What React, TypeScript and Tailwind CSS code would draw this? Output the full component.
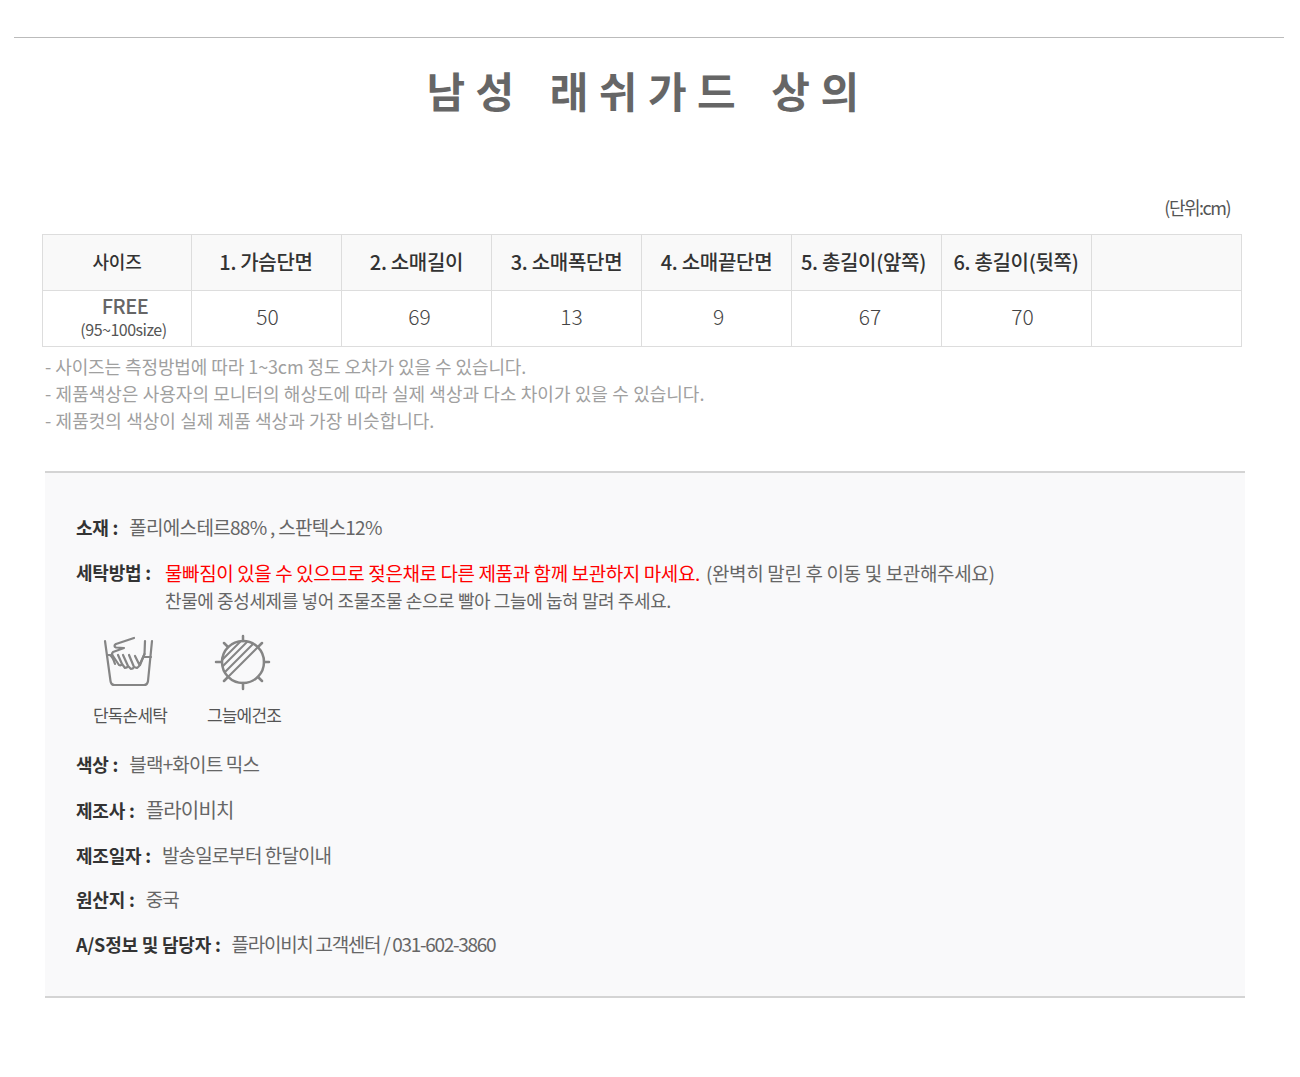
import React from 'react';

const font = { fontFamily: '"Noto Sans CJK KR", "Noto Sans", sans-serif' };

const headers = ['사이즈', '1. 가슴단면', '2. 소매길이', '3. 소매폭단면', '4. 소매끝단면', '5. 총길이(앞쪽)', '6. 총길이(뒷쪽)', ''];
const headerPad = ['w-[149px] text-[18px]', 'text-[20px] pr-[1px]', 'text-[20px]', 'text-[20px]', 'text-[20px]', 'text-[20px] pr-[6px]', 'text-[20px] pr-[1px]', ''];
const values = ['50', '69', '13', '9', '67', '70', ''];
const valuePad = ['pl-[2px]', 'pl-[6px]', 'pl-[10px]', 'pl-[4px]', 'pl-[7px]', 'pl-[12px]', ''];

const HandWashIcon = () => (
  <svg width="60" height="60" viewBox="0 0 60 60" fill="none" stroke="#858585" strokeWidth="2.200" strokeLinecap="round" strokeLinejoin="round">
    <path d="M5 9 L10.500 49 Q11 53 14.500 53 L44 53 Q47.500 53 48 49 L52 9" />
    <path d="M7 23 L10 23 Q13 25 15 32 M45 9 L44.500 22 L40 33 M44.500 25 L51 25" />
    <path d="M34 6 L16 12 Q13 14 16 15.500 L24 16 L13 20 Q11 22 13 24 L19 33 Q21 34 22 32 L18 23 M22 32 L25 36 Q27 36 28 34 L23 23 M28 34 L31 37 Q33 37 34 35 L29 23 M34 35 L37 36 Q39 35 39.500 33 L35 24 M39.500 33 L44.500 22" />
  </svg>
);

const ShadeDryIcon = () => (
  <svg width="62" height="60" viewBox="0 0 62 60" fill="none" stroke="#858585" strokeWidth="2.500" strokeLinecap="round">
    <defs>
      <clipPath id="dial">
        <circle cx="30" cy="30" r="21" />
      </clipPath>
    </defs>
    <circle cx="30" cy="30" r="21" />
    <path d="M30 4 V9 M30 51 V57 M3 30 H8 M51 30 H56 M11 11 L15 15 M45 45 L49 49 M49 11 L45 15 M15 45 L11 49" />
    <g clipPath="url(#dial)" strokeWidth="2">
      <path d="M14 46 L46 14 M4 48 L42 10 M0 44 L36 8 M0 37 L30 7" />
    </g>
  </svg>
);

const InfoRow = ({ label, value, className }: { label: string; value: string; className: string }) => (
  <p className={`flex items-center text-[#666] ${className}`}>
    <b className="font-bold text-[#333] text-[18px] tracking-[-0.200px] mr-[11px]">{label}</b>
    {value}
  </p>
);

export default function App() {
  return (
    <div className="w-[1300px] h-[1077px] bg-white overflow-hidden pt-[37px]" style={font}>
      <div className="ml-[14px] mr-[16px] h-px bg-[#bbb]" />

      <h1 className="mt-[22px] text-center text-[42px] leading-[60px] font-bold text-[#666] tracking-[10.500px] [word-spacing:5px] pr-[4px]">
        남성 래쉬가드 상의
      </h1>

      <p className="mt-[74px] pr-[70px] text-right text-[18px] leading-[26px] text-[#555] tracking-[-1.500px]">(단위:cm)</p>

      <table className="mt-[14px] ml-[42px] w-[1200px] table-fixed border-collapse border border-[#ddd]">
        <tbody>
          <tr className="h-[56px] bg-[#f9f9f9]">
            {headers.map((h, i) => (
              <td
                key={i}
                className={`border border-[#ddd] text-center text-[#333] font-medium tracking-[-0.300px] pb-[2px] ${headerPad[i]}`}
              >
                {h}
              </td>
            ))}
          </tr>
          <tr className="h-[56px]">
            <td className="border border-[#ddd] text-center text-[#555] pb-[1px]">
              <div className="text-[20px] leading-[23px] font-medium tracking-[-0.500px] text-[#666] pl-[16px]">FREE</div>
              <div className="text-[16px] leading-[25px] tracking-[-0.500px] pl-[13px]">(95~100size)</div>
            </td>
            {values.map((v, i) => (
              <td key={i} className={`border border-[#ddd] text-center text-[21px] font-light text-[#444] pb-[4px] ${valuePad[i]}`}>
                {v}
              </td>
            ))}
          </tr>
        </tbody>
      </table>

      <div className="mt-[6px] ml-[45px] text-[18px] leading-[27px] text-[#a0a0a0] [word-spacing:0.300px]">
        <p className="tracking-[-0.150px]">- 사이즈는 측정방법에 따라 1~3cm 정도 오차가 있을 수 있습니다.</p>
        <p>- 제품색상은 사용자의 모니터의 해상도에 따라 실제 색상과 다소 차이가 있을 수 있습니다.</p>
        <p>- 제품컷의 색상이 실제 제품 색상과 가장 비슷합니다.</p>
      </div>

      <section className="mt-[37px] ml-[45px] w-[1200px] h-[527px] bg-[#f9f9fa] border-y-2 border-[#d4d4d4] pt-[40px] pl-[31px]">
        <InfoRow label="소재 :" value="폴리에스테르88% , 스판텍스12%" className="text-[19px] leading-[28px] tracking-[-0.700px]" />

        <div className="mt-[18px] flex text-[19px] leading-[27px] text-[#666]">
          <b className="w-[89px] font-bold text-[#333] text-[18px] tracking-[-0.200px]">세탁방법 :</b>
          <div>
            <p className="tracking-[-0.400px]">
              <span className="text-[#f00]">물빠짐이 있을 수 있으므로 젖은채로 다른 제품과 함께 보관하지 마세요.</span>
              <span className="ml-[6px] tracking-[-0.350px]">(완벽히 말린 후 이동 및 보관해주세요)</span>
            </p>
            <p className="mt-[1px] text-[18px] tracking-[-0.400px]">찬물에 중성세제를 넣어 조물조물 손으로 빨아 그늘에 눕혀 말려 주세요.</p>
          </div>
        </div>

        <div className="mt-[19px] flex text-[17px] leading-[24px] tracking-[-0.800px] text-[#555]">
          <div className="w-[114px] ml-[-3px] flex flex-col items-center">
            <div className="h-[60px] mt-[-1px]"><HandWashIcon /></div>
            <p className="mt-[11px]">단독손세탁</p>
          </div>
          <div className="w-[114px] flex flex-col items-center">
            <div className="h-[60px] mt-[-1px]"><ShadeDryIcon /></div>
            <p className="mt-[11px]">그늘에건조</p>
          </div>
        </div>

        <InfoRow label="색상 :" value="블랙+화이트 믹스" className="mt-[23px] text-[19px] leading-[28px] tracking-[-0.800px]" />
        <InfoRow label="제조사 :" value="플라이비치" className="mt-[18px] text-[20px] leading-[28px] tracking-[-0.800px]" />
        <InfoRow label="제조일자 :" value="발송일로부터 한달이내" className="mt-[17px] text-[19px] leading-[28px] tracking-[-0.900px]" />
        <InfoRow label="원산지 :" value="중국" className="mt-[16px] text-[19px] leading-[28px] tracking-[-0.800px]" />
        <InfoRow label="A/S정보 및 담당자 :" value="플라이비치 고객센터 / 031-602-3860" className="mt-[17px] text-[19px] leading-[28px] tracking-[-1.300px]" />
      </section>
    </div>
  );
}
